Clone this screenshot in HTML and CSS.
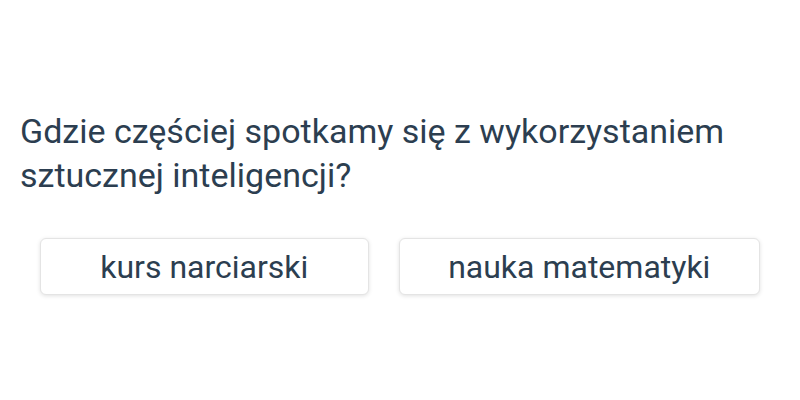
FILE: index.html
```html
<!DOCTYPE HTML>
<html>

<head>
    <title>Quiz</title>
    <link rel="stylesheet" href="styles.css">
</head>

<body>
    <main class="quiz">
        <p class="question">Gdzie częściej spotkamy się z wykorzystaniem sztucznej inteligencji?</p>
        <div class="answers">
            <button type="button" class="answer answer-a">kurs narciarski</button>
            <button type="button" class="answer answer-b">nauka matematyki</button>
        </div>
    </main>
</body>

</html>
```

FILE: styles.css
```css
html,
body {
    margin: 0;
    height: 100%;
    background: #fff;
}

body {
    font-family: Roboto, "Noto Sans", sans-serif;
    color: #2c3e50;
}

.quiz {
    box-sizing: border-box;
    min-height: 100%;
    padding: 4px 20px 0;
    display: flex;
    flex-direction: column;
    justify-content: center;
}

.question {
    margin: 0 0 41px;
    font-size: 34px;
    line-height: 44px;
}

.answers {
    display: flex;
    gap: 30px;
    padding: 0 20px;
}

.answer {
    height: 57px;
    padding: 0;
    font-family: inherit;
    font-size: 32px;
    color: #2c3e50;
    background: #fff;
    border: 1px solid #e4e4e4;
    border-radius: 6px;
    box-shadow: 0 1px 4px rgba(0, 0, 0, 0.12);
    cursor: pointer;
}

.answer-a {
    width: 329px;
}

.answer-b {
    width: 362px;
}
```
